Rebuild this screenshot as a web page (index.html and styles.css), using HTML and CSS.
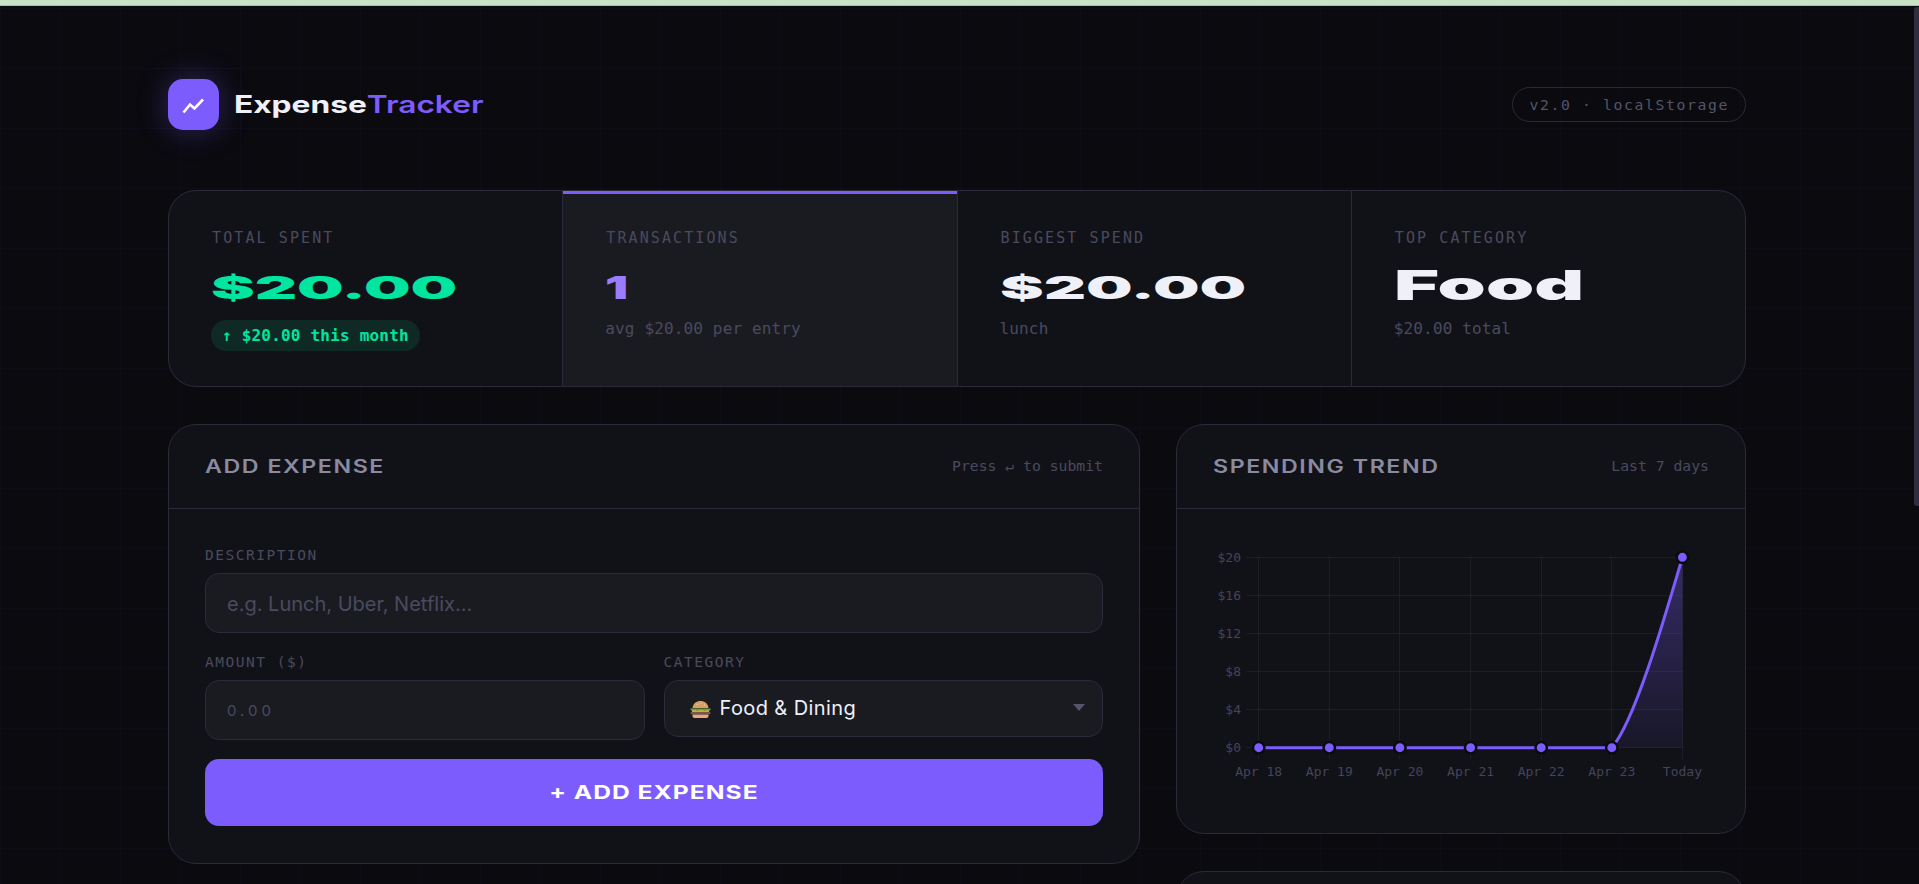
FILE: index.html
```html
<!DOCTYPE html>
<html lang="en">
<head>
<meta charset="UTF-8">
<meta name="viewport" content="width=device-width, initial-scale=1.0">
<title>ExpenseTracker</title>
<link rel="stylesheet" href="styles.css">
</head>
<body>
<div class="top-strip"></div>
<div class="scroll-thumb"></div>
<div class="page">

  <header class="header">
    <div class="brand">
      <div class="brand-icon">
        <svg width="51" height="51" viewBox="0 0 51 51" fill="none">
          <polyline points="15.5,33.5 22,25.5 26.5,29.5 35,20.5" stroke="#fff" stroke-width="2.6" stroke-linejoin="miter"/>
        </svg>
      </div>
      <div class="brand-name"><span class="brand-text">Expense<span class="accent">Tracker</span></span></div>
    </div>
    <div class="version">v2.0 · localStorage</div>
  </header>

  <section class="stats">
    <div class="stat">
      <div class="stat-label">TOTAL SPENT</div>
      <div class="stat-value green"><span>$20.00</span></div>
      <div class="stat-pill">↑ $20.00 this month</div>
    </div>
    <div class="stat active">
      <div class="stat-label">TRANSACTIONS</div>
      <div class="stat-value purple"><span>1</span></div>
      <div class="stat-sub">avg $20.00 per entry</div>
    </div>
    <div class="stat">
      <div class="stat-label">BIGGEST SPEND</div>
      <div class="stat-value"><span>$20.00</span></div>
      <div class="stat-sub">lunch</div>
    </div>
    <div class="stat">
      <div class="stat-label">TOP CATEGORY</div>
      <div class="stat-value word"><span>Food</span></div>
      <div class="stat-sub">$20.00 total</div>
    </div>
  </section>

  <div class="columns">
    <div class="column-left">
      <section class="card">
        <div class="card-head">
          <h2 class="card-title"><span>ADD EXPENSE</span></h2>
          <div class="card-meta">Press ↵ to submit</div>
        </div>
        <div class="form">
          <label class="field-label">DESCRIPTION</label>
          <input class="field" type="text" placeholder="e.g. Lunch, Uber, Netflix...">
          <div class="form-row">
            <div class="form-col">
              <label class="field-label">AMOUNT ($)</label>
              <input class="field amount" type="text" placeholder="0.00">
            </div>
            <div class="form-col">
              <label class="field-label">CATEGORY</label>
              <div class="select">
                <svg class="burger" width="21" height="17" viewBox="0 0 21 17">
                  <path d="M2.5 7C3 2.5 6.5 0 10.5 0s7.500 2.500 8 7z" fill="#d9a066"/>
                  <circle cx="7" cy="3.500" r=".5" fill="#f6dfb5"/>
                  <circle cx="11" cy="2.200" r=".5" fill="#f6dfb5"/>
                  <circle cx="14.500" cy="4" r=".5" fill="#f6dfb5"/>
                  <path d="M.5 7.500h20v1.600l-2.500 1.300-3-1.100-4 1.200-4-1.200-3 1.100L.5 9.100z" fill="#6ba33d"/>
                  <rect x="2" y="9.500" width="17" height="1.500" fill="#f4c534"/>
                  <rect x=".5" y="10.800" width="20" height="2.400" rx="1.200" fill="#7d5548"/>
                  <path d="M2.500 13.500h16V15c0 1.100-.9 2-2 2h-12c-1.100 0-2-.9-2-2z" fill="#eba583"/>
                </svg>
                <span class="select-text">Food &amp; Dining</span>
                <span class="select-caret"></span>
              </div>
            </div>
          </div>
          <button class="submit" type="button"><span>+ ADD EXPENSE</span></button>
        </div>
      </section>
    </div>

    <div class="column-right">
      <section class="card">
        <div class="card-head">
          <h2 class="card-title"><span>SPENDING TREND</span></h2>
          <div class="card-meta">Last 7 days</div>
        </div>
        <div class="chart-wrap">
          <svg class="chart" width="496" height="253" viewBox="0 0 496 253">
            <defs>
              <linearGradient id="areaFill" x1="0" y1="0" x2="0" y2="1">
                <stop offset="0" stop-color="#7c5cfc" stop-opacity=".34"/>
                <stop offset="1" stop-color="#7c5cfc" stop-opacity=".07"/>
              </linearGradient>
            </defs>
            <g class="grid-lines">
              <path d="M33 12.500H469.500M33 50.500H469.500M33 88.500H469.500M33 126.500H469.500M33 164.500H469.500M33 202.500H469.500"/>
              <path d="M45.500 12V214M116.500 12V214M186.500 12V214M257.500 12V214M328.500 12V214M398.500 12V214M469.500 12V214"/>
            </g>
            <path d="M398.800 202.700C421 177 449 82 469.400 12.300V202.700z" fill="url(#areaFill)"/>
            <path class="line" d="M45.700 202.700H398.800C421 177 449 82 469.400 12.300"/>
            <g class="dots">
              <circle cx="45.700" cy="202.700" r="5.700"/>
              <circle cx="116.300" cy="202.700" r="5.700"/>
              <circle cx="186.900" cy="202.700" r="5.700"/>
              <circle cx="257.600" cy="202.700" r="5.700"/>
              <circle cx="328.200" cy="202.700" r="5.700"/>
              <circle cx="398.800" cy="202.700" r="5.700"/>
              <circle cx="469.400" cy="12.300" r="5.700"/>
            </g>
            <g class="axis-y">
              <text x="28" y="17">$20</text>
              <text x="28" y="55">$16</text>
              <text x="28" y="93">$12</text>
              <text x="28" y="131">$8</text>
              <text x="28" y="169">$4</text>
              <text x="28" y="207">$0</text>
            </g>
            <g class="axis-x">
              <text x="45.700" y="231">Apr 18</text>
              <text x="116.300" y="231">Apr 19</text>
              <text x="186.900" y="231">Apr 20</text>
              <text x="257.600" y="231">Apr 21</text>
              <text x="328.200" y="231">Apr 22</text>
              <text x="398.800" y="231">Apr 23</text>
              <text x="469.400" y="231">Today</text>
            </g>
          </svg>
        </div>
      </section>
      <section class="card card-next"></section>
    </div>
  </div>

</div>
</body>
</html>
```
FILE: styles.css
```css
* {
  box-sizing: border-box;
}
html {
  background-color: #0a0a0f;
}
body {
  margin: 0;
  font-family: Inter, "Noto Sans", sans-serif;
  color: #f0f0f8;
  background-color: #0a0a0f;
  background-image:
    linear-gradient(rgba(124, 92, 252, 0.035) 1px, transparent 1px),
    linear-gradient(90deg, rgba(124, 92, 252, 0.035) 1px, transparent 1px);
  background-size: 60px 60px;
  background-position: 0 8px;
}
.top-strip {
  height: 6px;
  background-color: #c8e3c8;
  border-bottom: 1px solid #a9c2a9;
}
.scroll-thumb {
  position: fixed;
  top: 7px;
  right: 0;
  width: 5px;
  height: 499px;
  background-color: #2e2e3e;
  border-radius: 3px 0 0 3px;
}
.page {
  padding: 73px 173px 77px 168px;
}

/* header */
.header {
  display: flex;
  align-items: center;
  justify-content: space-between;
  margin-bottom: 60px;
}
.brand {
  display: flex;
  align-items: center;
  gap: 15px;
}
.brand-icon {
  width: 51px;
  height: 51px;
  border-radius: 15px;
  background-color: #7c5cfc;
  box-shadow: 0 0 30px rgba(124, 92, 252, 0.35);
}
.brand-icon svg {
  display: block;
}
.brand-name {
  font-size: 24px;
  font-weight: 700;
  width: 247px;
  white-space: nowrap;
}
.brand-text {
  display: inline-block;
  transform: scaleX(1.32);
  transform-origin: left center;
}
.accent {
  color: #7c5cfc;
  font-weight: 600;
}
.version {
  font-family: "DejaVu Sans Mono", monospace;
  font-size: 14.75px;
  letter-spacing: 1.62px;
  line-height: 33px;
  padding: 0 16px;
  color: #55556a;
  border: 1px solid #2a2a38;
  border-radius: 20px;
}

/* stats */
.stats {
  display: grid;
  grid-template-columns: repeat(4, 1fr);
  gap: 1px;
  background-color: #2a2a38;
  border: 1px solid #2a2a38;
  border-radius: 28px;
  overflow: hidden;
  margin-bottom: 37px;
}
.stat {
  position: relative;
  background-color: #111218;
  padding: 38px 36px 35px 42px;
}
.stat.active {
  background-color: #1a1b21;
}
.stat.active::before {
  content: "";
  position: absolute;
  top: 0;
  left: 0;
  right: 0;
  height: 3px;
  background-color: #7c5cfc;
}
.stat-label {
  margin-left: 1px;
  font-family: "DejaVu Sans Mono", monospace;
  font-size: 15px;
  line-height: 18px;
  letter-spacing: 2.1px;
  color: #4a4a5e;
}
.stat-value {
  height: 44px;
  line-height: 44px;
  margin-top: 19px;
  font-size: 32px;
  font-weight: 900;
  color: #f0f0f8;
  white-space: nowrap;
}
.stat-value span {
  display: inline-block;
  transform: scaleX(2.05);
  transform-origin: left center;
}
.stat-value.green {
  color: #00e5a0;
}
.stat-value.purple {
  color: #9b7cff;
}
.stat-value.purple span {
  transform: scaleX(1.6);
}
.stat-value.word {
  font-size: 41px;
  line-height: 38px;
}
.stat-value.word span {
  transform: scaleX(1.885);
}
.stat-sub {
  margin-top: 10px;
  font-family: "DejaVu Sans Mono", monospace;
  font-size: 16px;
  line-height: 17px;
  letter-spacing: 0.15px;
  color: #4a4a5e;
}
.stat-pill {
  width: fit-content;
  margin-top: 10px;
  padding: 6px 11px;
  font-family: "DejaVu Sans Mono", monospace;
  font-size: 16px;
  font-weight: 700;
  line-height: 19px;
  letter-spacing: 0.2px;
  white-space: nowrap;
  color: #00e5a0;
  background-color: #0f2a25;
  border-radius: 20px;
}

/* cards */
.columns {
  display: grid;
  grid-template-columns: 1fr 570px;
  gap: 36px;
  align-items: start;
}
.column-right {
  display: flex;
  flex-direction: column;
  gap: 37px;
}
.card {
  background-color: #111218;
  border: 1px solid #2a2a38;
  border-radius: 28px;
}
.card-next {
  height: 600px;
}
.card-head {
  display: flex;
  align-items: center;
  justify-content: space-between;
  height: 84px;
  padding: 0 36px;
  border-bottom: 1px solid #2a2a38;
}
.card-title {
  margin: 0;
  font-size: 18px;
  font-weight: 600;
  letter-spacing: 1.2px;
  white-space: nowrap;
  color: #8a8aa0;
}
.card-title span {
  display: inline-block;
  transform: scaleX(1.29);
  transform-origin: left center;
}
.card-meta {
  font-family: "DejaVu Sans Mono", monospace;
  font-size: 14.75px;
  margin-top: -2px;
  color: #4a4a5e;
}

/* form */
.form {
  padding: 37px 36px 37px;
}
.field-label {
  display: block;
  font-family: "DejaVu Sans Mono", monospace;
  font-size: 14.5px;
  line-height: 18px;
  letter-spacing: 1.53px;
  color: #4a4a5e;
  margin-bottom: 9px;
}
.field {
  display: block;
  width: 100%;
  height: 60px;
  padding: 2px 21px 0;
  font-family: Inter, "Noto Sans", sans-serif;
  font-size: 20px;
  color: #f0f0f8;
  background-color: #1a1b21;
  border: 1px solid #2a2a38;
  border-radius: 14px;
  outline: none;
}
.field::placeholder {
  color: #4a4a5e;
  opacity: 1;
}
.field.amount {
  padding-top: 0;
  font-size: 15px;
  letter-spacing: 4px;
}
.form-row {
  display: grid;
  grid-template-columns: 1fr 1fr;
  gap: 19px;
  margin-top: 20px;
}
.select {
  display: flex;
  align-items: center;
  height: 57px;
  padding: 0 17px 2px 25px;
  font-size: 20px;
  letter-spacing: 0.4px;
  color: #f0f0f8;
  background-color: #1a1b21;
  border: 1px solid #2a2a38;
  border-radius: 14px;
}
.burger {
  flex: none;
  margin-right: 9px;
  margin-top: 3px;
}
.select-text {
  flex: 1;
  white-space: nowrap;
}
.select-caret {
  width: 0;
  height: 0;
  border-left: 6px solid transparent;
  border-right: 6px solid transparent;
  border-top: 7px solid #55556a;
}
.submit {
  display: block;
  width: 100%;
  height: 67px;
  margin-top: 19px;
  font-family: Inter, "Noto Sans", sans-serif;
  font-size: 19px;
  font-weight: 700;
  letter-spacing: 0.8px;
  color: #fff;
  background-color: #7c5cfc;
  border: none;
  border-radius: 14px;
  cursor: pointer;
}
.submit span {
  display: inline-block;
  transform: scaleX(1.295);
}

/* chart */
.chart-wrap {
  padding: 36px 36px 35px;
}
.chart {
  display: block;
}
.grid-lines path {
  fill: none;
  stroke: rgba(255, 255, 255, 0.05);
  stroke-width: 1;
}
.line {
  fill: none;
  stroke: #7c5cfc;
  stroke-width: 3;
}
.dots circle {
  fill: #7c5cfc;
  stroke: #0a0a0f;
  stroke-width: 2.5;
}
.axis-y text,
.axis-x text {
  font-family: "DejaVu Sans Mono", monospace;
  font-size: 13px;
  fill: #44445a;
}
.axis-y text {
  text-anchor: end;
}
.axis-x text {
  text-anchor: middle;
}
```
